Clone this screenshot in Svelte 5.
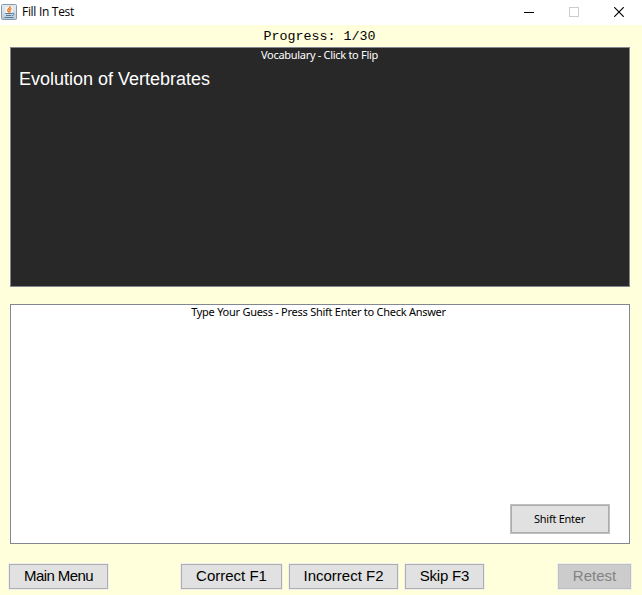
<script>
  let flipped = $state(false);
  let guess = $state('');
</script>

<main class="window">
  <header class="titlebar">
    <svg class="java" width="16" height="16" viewBox="0 0 16 16" aria-hidden="true">
      <defs>
        <linearGradient id="tile" x1="0" y1="0" x2="0" y2="1">
          <stop offset="0" stop-color="#e4eaf0" />
          <stop offset=".5" stop-color="#d5dfe8" />
          <stop offset="1" stop-color="#b5c9da" />
        </linearGradient>
      </defs>
      <rect x=".5" y=".5" width="15" height="15" rx="1" fill="url(#tile)" stroke="#8798a8" />
      <path d="M4.500 3H11.500V9H4.500z" fill="#f6f4f0" />
      <path d="M9.300 2.200C9.500 4.300 6.200 4.700 6.700 6.500c.2.800 1 1.200 1 2M10.600 4.500C8.600 5.200 8.500 6 9 6.900c.3.600 0 1.100-.5 1.600" fill="none" stroke="#e8721c" stroke-width="1.300" />
      <path d="M4.300 9.500H11M5 11.500H10.300M11 9.300c3-.5 2.700 1.700 0 2.300M3.300 13.500H12.500" fill="none" stroke="#587b98" />
    </svg>
    <span class="title">Fill In Test</span>
    <div class="controls">
      <svg width="10" height="10"><path d="M0 5.500H10" stroke="#000" /></svg>
      <svg width="10" height="10"><rect x=".5" y=".5" width="9" height="9" fill="none" stroke="#ccc" /></svg>
      <svg width="10" height="10"><path d="M.2 .2L9.800 9.800M9.800 .2L.2 9.800" stroke="#000" stroke-width="1.150" /></svg>
    </div>
  </header>

  <div class="progress">Progress: 1/30</div>

  <section class="panel card" class:flipped>
    <button class="caption vocab" onclick={() => (flipped = !flipped)}>Vocabulary - Click to Flip</button>
    <div class="term">Evolution of Vertebrates</div>
  </section>

  <section class="panel answer">
    <div class="caption hint">Type Your Guess - Press Shift Enter to Check Answer</div>
    <textarea bind:value={guess} aria-label="Guess"></textarea>
    <button class="check">Shift Enter</button>
  </section>

  <footer>
    <button class="action menu">Main Menu</button>
    <div class="grades">
      <button class="action correct">Correct F1</button>
      <button class="action incorrect">Incorrect F2</button>
      <button class="action skip">Skip F3</button>
    </div>
    <button class="action retest" disabled>Retest</button>
  </footer>
</main>

<style>
  :global(body) { margin: 0; overflow: hidden; }
  * { box-sizing: border-box; }
  button { margin: 0; padding: 0; border: 0; white-space: nowrap; }
  .window { width: 642px; height: 595px; background: #ffffdc; display: flex; flex-direction: column; }
  .titlebar { height: 25px; background: #fff; display: flex; align-items: center; padding: 0 18px 1px 1px; }
  .title { margin-left: 5px; font: 12px/16px "Open Sans", sans-serif; letter-spacing: -0.3px; color: #000; }
  .controls { margin-left: auto; display: flex; gap: 35px; }
  .progress { height: 22px; text-align: center; font: 13.333px/22px "Liberation Mono", monospace; padding: 1px 3px 0 0; color: #000; }
  .panel { width: 620px; height: 240px; margin-left: 10px; border: 1px solid #828790; display: flex; flex-direction: column; }
  .card { background: #282828; color: #fff; }
  .answer { background: #fff; margin-top: 17px; }
  .caption { height: 14px; font: 11px/14px "Noto Sans", sans-serif; text-align: center; background: none; color: inherit; }
  .vocab { letter-spacing: -0.3px; padding-right: 1px; }
  .hint { letter-spacing: -0.26px; padding-right: 3px; color: #000; }
  .term { font: 18px/22px "Liberation Sans", sans-serif; margin: 6px 0 0 8px; }
  textarea { flex: 1; border: 0; padding: 4px 8px; resize: none; outline: 0; background: transparent; font: 18px/22px "Liberation Sans", sans-serif; }
  .check { width: 100px; height: 30px; margin: 0 19px 9px auto; padding-right: 1px; border: 2px solid #adadad; outline: 1px solid #bfbfbf; outline-offset: -1px; background: #e1e1e1; font: 11px/26px "Noto Sans", sans-serif; letter-spacing: -0.28px; color: #000; }
  footer { display: flex; height: 25px; margin: 20px 11px 0 9px; justify-content: space-between; }
  .grades { display: flex; gap: 7px; margin-right: 1px; }
  .action { height: 25px; padding-bottom: 2px; border: 1px solid #adadad; box-shadow: 0 0 0 1px #f0f0f0; background: #e1e1e1; color: #000; font: 15px/21px "Liberation Sans", sans-serif; }
  .menu { width: 99px; letter-spacing: -0.6px; }
  .correct { width: 101px; }
  .incorrect { width: 109px; }
  .skip { width: 79px; letter-spacing: -0.2px; }
  .retest { width: 73px; }
  .action:disabled { background: #ccc; border-color: #bfbfbf; color: #838383; }
</style>
